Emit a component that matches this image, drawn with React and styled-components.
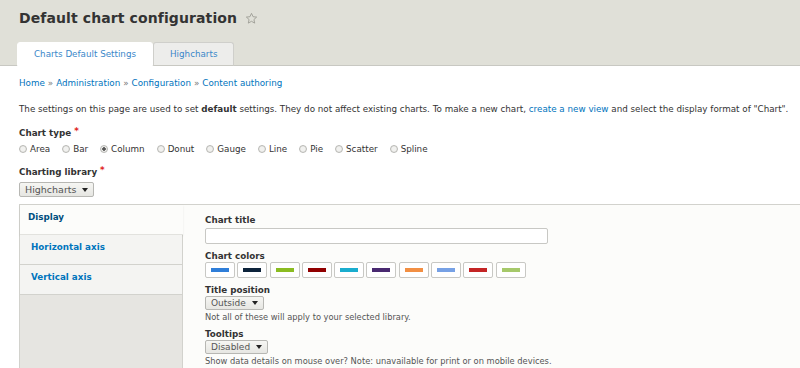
import React from 'react';
import styled, { createGlobalStyle } from 'styled-components';

const GlobalStyle = createGlobalStyle`
  html, body {
    margin: 0;
    padding: 0;
    background: #fff;
    overflow: hidden;
  }
  body {
    font-family: "DejaVu Sans", "Liberation Sans", sans-serif;
    font-size: 8.75px;
    line-height: 12px;
    color: #333;
  }
`;

const Header = styled.div`
  background: #e0e0d8;
  padding: 9px 19px 0 17px;
  height: 66px;
  box-sizing: border-box;
  border-bottom: 1px solid #c8c8c2;
  display: flex;
  flex-direction: column;
  justify-content: space-between;
`;

const TitleRow = styled.div`
  display: flex;
  align-items: center;
  gap: 8px;
  padding-left: 2px;
  height: 18px;
`;

const PageTitle = styled.h1`
  margin: 0;
  font-size: 14px;
  line-height: 18px;
  font-weight: bold;
  color: #333;
  letter-spacing: 0.1px;
`;

const Tabs = styled.div`
  display: flex;
  align-items: flex-end;
  margin-bottom: -1px;
`;

const Tab = styled.a`
  display: block;
  padding: 0 16px;
  height: 22px;
  line-height: 22px;
  font-size: 8.75px;
  color: #3a87c9;
  background: ${(p) => (p.$active ? '#fff' : '#ededeb')};
  border: 1px solid ${(p) => (p.$active ? '#fff' : '#cfcfcb')};
  border-bottom: ${(p) => (p.$active ? '1px solid #fff' : '1px solid #c8c8c2')};
  border-radius: 3px 3px 0 0;
  text-decoration: none;
`;

const Main = styled.div`
  width: 830px;
  padding: 11px 19px 0;
`;

const Breadcrumb = styled.div`
  color: #0074bd;
  margin-bottom: 14px;
  span {
    color: #777;
    margin: 0 3px;
  }
`;

const Intro = styled.p`
  margin: 0 0 10px;
  white-space: nowrap;
  a {
    color: #0074bd;
    text-decoration: none;
  }
`;

const Field = styled.div`
  margin-bottom: ${(p) => p.$mb || '10px'};
`;

const Label = styled.div`
  font-weight: bold;
  color: #333;
  margin-bottom: ${(p) => p.$mb || '2px'};
`;

const Required = styled.span`
  color: #e02020;
  margin-left: 3px;
  vertical-align: 2px;
`;

const RadioRow = styled.div`
  display: flex;
  gap: 12px;
  align-items: center;
`;

const RadioItem = styled.label`
  display: flex;
  align-items: center;
  gap: 3px;
  color: #333;
`;

const RadioDot = styled.span`
  width: 8px;
  height: 8px;
  border-radius: 50%;
  border: 1px solid #b8b8b4;
  background: radial-gradient(circle, ${(p) => (p.$on ? '#555 0 1.5px, ' : '')}#f1f1ef 2px, #dcdcd8 100%);
  box-sizing: border-box;
`;

const Select = styled.div`
  display: inline-flex;
  align-items: center;
  gap: 6px;
  height: ${(p) => p.$h || '14px'};
  padding: 0 5px;
  border: 1px solid #b7b7b3;
  border-radius: 2px;
  box-sizing: border-box;
  background: linear-gradient(#f6f6f3, #e6e6e2);
  font-size: ${(p) => p.$size || '9px'};
  color: #555;
  &::after {
    content: '';
    border-left: 3px solid transparent;
    border-right: 3px solid transparent;
    border-top: 4px solid #222;
  }
`;

const VerticalTabs = styled.div`
  display: flex;
  border: 1px solid #d2d2cd;
  border-right: none;
  height: 180px;
  margin-top: 7px;
`;

const TabMenu = styled.div`
  width: 162px;
  flex-shrink: 0;
  background: #e6e5e1;
  border-right: 1px solid #d2d2cd;
`;

const MenuItem = styled.div`
  height: 30px;
  box-sizing: border-box;
  padding: ${(p) => (p.$active ? '6px 0 0 8px' : '6px 0 0 11px')};
  font-weight: bold;
  color: ${(p) => (p.$active ? '#004f80' : '#0074bd')};
  background: ${(p) => (p.$active ? '#fcfcfa' : '#f4f4f2')};
  border-bottom: 1px solid ${(p) => (p.$active ? '#e2e2de' : '#d2d2cd')};
  margin-right: ${(p) => (p.$active ? '-1px' : '0')};
  box-shadow: ${(p) => (p.$active ? '0 1px 2px rgba(0,0,0,0.08)' : 'none')};
  position: relative;
`;

const Pane = styled.div`
  flex: 1;
  background: #fcfcfa;
  padding: 9px 22px 0;
`;

const TextInput = styled.div`
  width: 343px;
  height: 16px;
  box-sizing: border-box;
  border: 1px solid #c8c8c4;
  border-radius: 2px;
  background: #fff;
`;

const Swatches = styled.div`
  display: flex;
  gap: 2.3px;
`;

const Swatch = styled.div`
  width: 30px;
  height: 16px;
  box-sizing: border-box;
  border: 1px solid #c8c8c4;
  border-radius: 2px;
  background: #fff;
  display: flex;
  align-items: center;
  justify-content: center;
  &::before {
    content: '';
    width: 18px;
    height: 3.5px;
    background: ${(p) => p.$color};
  }
`;

const Help = styled.div`
  font-size: 8.3px;
  color: #555;
  margin-top: 1px;
`;

const Star = () => (
  <svg width="13" height="13" viewBox="0 0 24 24" fill="none" stroke="#9a9a92" strokeWidth="1.6" strokeLinejoin="round">
    <path d="M12 2.5l2.9 6.2 6.6.7-5 4.5 1.4 6.6L12 17.2l-5.9 3.3 1.4-6.6-5-4.5 6.6-.7z" />
  </svg>
);

const chartTypes = ['Area', 'Bar', 'Column', 'Donut', 'Gauge', 'Line', 'Pie', 'Scatter', 'Spline'];
const colors = ['#2f7ed8', '#0d233a', '#8bbc21', '#910000', '#1aadce', '#492970', '#f28f43', '#77a1e5', '#c42525', '#a6c96a'];

const App = () => (
  <>
    <GlobalStyle />
    <Header>
      <TitleRow>
        <PageTitle>Default chart configuration</PageTitle>
        <Star />
      </TitleRow>
      <Tabs>
        <Tab $active>Charts Default Settings</Tab>
        <Tab>Highcharts</Tab>
      </Tabs>
    </Header>
    <Main>
      <Breadcrumb>
        Home<span>»</span>Administration<span>»</span>Configuration<span>»</span>Content authoring
      </Breadcrumb>
      <Intro>
        The settings on this page are used to set <b>default</b> settings. They do not affect existing charts. To make a new chart, <a href="#">create a new view</a> and select the display format of "Chart".
      </Intro>
      <Field $mb="9px">
        <Label $mb="4px">Chart type<Required>*</Required></Label>
        <RadioRow>
          {chartTypes.map((t) => (
            <RadioItem key={t}>
              <RadioDot $on={t === 'Column'} />
              {t}
            </RadioItem>
          ))}
        </RadioRow>
      </Field>
      <Field $mb="0">
        <Label $mb="4px">Charting library<Required>*</Required></Label>
        <Select $size="9.5px" $h="15px">Highcharts</Select>
      </Field>
      <VerticalTabs>
        <TabMenu>
          <MenuItem $active>Display</MenuItem>
          <MenuItem>Horizontal axis</MenuItem>
          <MenuItem>Vertical axis</MenuItem>
        </TabMenu>
        <Pane>
          <Field $mb="6px">
            <Label>Chart title</Label>
            <TextInput />
          </Field>
          <Field $mb="6px">
            <Label $mb="0">Chart colors</Label>
            <Swatches>
              {colors.map((c) => (
                <Swatch key={c} $color={c} />
              ))}
            </Swatches>
          </Field>
          <Field $mb="5px">
            <Label $mb="0">Title position</Label>
            <Select>Outside</Select>
            <Help>Not all of these will apply to your selected library.</Help>
          </Field>
          <Field>
            <Label $mb="0">Tooltips</Label>
            <Select>Disabled</Select>
            <Help>Show data details on mouse over? Note: unavailable for print or on mobile devices.</Help>
          </Field>
        </Pane>
      </VerticalTabs>
    </Main>
  </>
);

export default App;
